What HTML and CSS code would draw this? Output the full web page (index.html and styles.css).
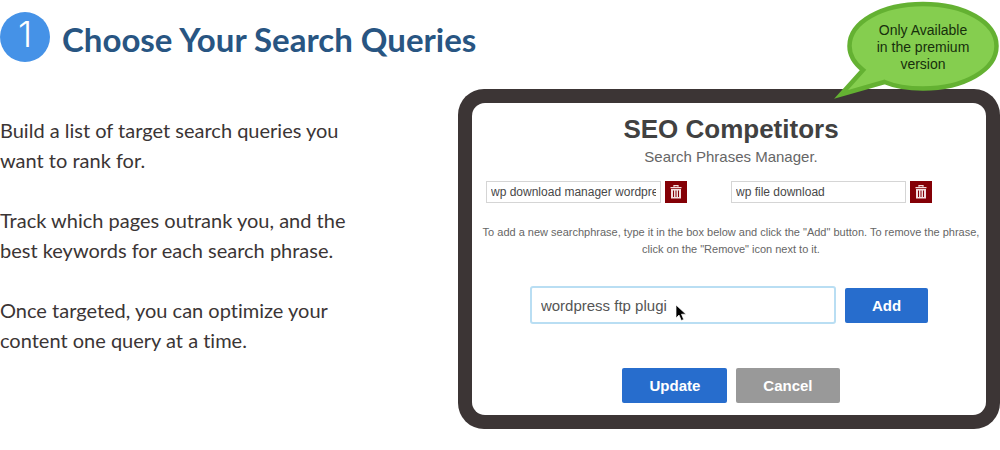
FILE: index.html
```html
<!DOCTYPE html>
<html lang="en">
<head>
<meta charset="utf-8">
<meta name="viewport" content="width=device-width, initial-scale=1">
<title>Choose Your Search Queries</title>
<link rel="stylesheet" href="styles.css">
</head>
<body>
<main class="step">
  <header class="step-header">
    <span class="step-number">1</span>
    <h1 class="step-title">Choose Your Search Queries</h1>
  </header>
  <div class="step-body">
    <div class="copy">
      <p>Build a list of target search queries you want to rank for.</p>
      <p>Track which pages outrank you, and the best keywords for each search phrase.</p>
      <p>Once targeted, you can optimize your content one query at a time.</p>
    </div>
    <div class="device">
      <form class="manager">
        <h2 class="manager-title">SEO Competitors</h2>
        <p class="manager-subtitle">Search Phrases Manager.</p>
        <div class="phrases">
          <div class="phrase">
            <input class="phrase-input" type="text" aria-label="Search phrase 1" value="wp download manager wordpress">
            <button class="remove" type="button" aria-label="Remove phrase 1">
              <svg class="trash" viewBox="0 0 12 14" aria-hidden="true"><path d="M4 1.8V.6h4v1.2M.5 2.7h11" fill="none" stroke="currentColor" stroke-width="1.3"/><path d="M1 4h10v9.5H1z" fill="currentColor"/><path d="M3.5 5.5V12M6 5.5V12M8.500 5.500V12" stroke="#840006" stroke-width="1"/></svg>
            </button>
          </div>
          <div class="phrase">
            <input class="phrase-input" type="text" aria-label="Search phrase 2" value="wp file download">
            <button class="remove" type="button" aria-label="Remove phrase 2">
              <svg class="trash" viewBox="0 0 12 14" aria-hidden="true"><path d="M4 1.8V.6h4v1.2M.5 2.7h11" fill="none" stroke="currentColor" stroke-width="1.3"/><path d="M1 4h10v9.5H1z" fill="currentColor"/><path d="M3.5 5.5V12M6 5.5V12M8.500 5.500V12" stroke="#840006" stroke-width="1"/></svg>
            </button>
          </div>
        </div>
        <p class="hint">To add a new searchphrase, type it in the box below and click the "Add" button. To remove the phrase, click on the "Remove" icon next to it.</p>
        <div class="add-row">
          <div class="add-field">
            <input class="add-input" type="text" aria-label="New search phrase" value="wordpress ftp plugi">
            <svg class="cursor" viewBox="0 0 12 18" aria-hidden="true"><path d="M1 1v13l3-3 2.300 5.500 2.400-1L6.500 10.200H11z" fill="#000" stroke="#fff" stroke-width=".7"/></svg>
          </div>
          <button class="button add-button" type="button">Add</button>
        </div>
        <div class="actions">
          <button class="button update-button" type="button">Update</button>
          <button class="button cancel-button" type="button">Cancel</button>
        </div>
      </form>
      <div class="badge">
        <svg class="badge-shape" viewBox="0 0 168 100" aria-hidden="true"><path d="M31 70C22 63 17.500 54 17.500 46C17.500 22 50 4 91 4S164.500 22 164.500 46S132 88.500 91 88.500C76 88.500 63 86.500 52.500 82L9 94.500Z" fill="#85ce4f" stroke="#64b132" stroke-width="4.500"/></svg>
        <p class="badge-text">Only Available<br>in the premium<br>version</p>
      </div>
    </div>
  </div>
</main>
</body>
</html>
```
FILE: styles.css
```css
* { box-sizing: border-box; }

body {
  margin: 0;
  background: #fff;
  color: #3b3535;
  font-family: Lato, sans-serif;
  font-variant-ligatures: none;
}

h1, h2, p { margin: 0; }

.step-header {
  display: flex;
  align-items: flex-start;
  gap: 12px;
  padding: 12px 0 25px;
}

.step-number {
  width: 50px;
  height: 50px;
  border-radius: 50%;
  background: #4592e7;
  color: #fff;
  font: 300 36px/44px Inter, sans-serif;
  text-align: center;
}

.step-title {
  padding-top: 2px;
  color: #285582;
  font-size: 33px;
  font-weight: 700;
  line-height: 50px;
}

.step-body {
  display: grid;
  grid-template-columns: 458fr 542fr;
  align-items: start;
}

.copy {
  display: grid;
  gap: 30px;
  max-width: 360px;
  padding-top: 26px;
  font-size: 20px;
  line-height: 30px;
}

.device {
  position: relative;
  padding: 14px;
  border-radius: 26px;
  background: #3c3535;
}

.manager {
  padding: 12px 0;
  border-radius: 13px;
  background: #fff;
  color: #484848;
  font-family: "Liberation Sans", Arial, sans-serif;
  text-align: center;
}

.manager-title {
  padding-left: 4px;
  color: #414141;
  font-size: 26px;
  line-height: 28px;
}

.manager-subtitle {
  padding-left: 4px;
  color: #666;
  font-size: 15px;
  line-height: 28px;
}

.phrases {
  display: grid;
  grid-template-columns: 1fr 1fr;
  padding: 10px 10px 0 14px;
}

.phrase {
  display: flex;
  gap: 4px;
  padding-right: 44px;
}

.phrase-input {
  flex: 1;
  min-width: 0;
  height: 22px;
  padding: 0 4px;
  border: 1px solid #d5d5d5;
  color: #484848;
  font: 12px "Liberation Sans", Arial, sans-serif;
}

.remove {
  display: grid;
  place-items: center;
  width: 22px;
  height: 22px;
  padding: 0;
  border: 0;
  background: #840006;
  color: #f3dede;
}

.trash {
  width: 12px;
  height: 14px;
}

.hint {
  padding: 21px 4px 0 8px;
  color: #666;
  font-size: 11px;
  line-height: 17px;
}

.add-row {
  display: flex;
  justify-content: center;
  align-items: center;
  gap: 9px;
  padding-top: 28px;
}

.add-field {
  position: relative;
  flex: 0 1 306px;
}

.add-input {
  display: block;
  width: 100%;
  height: 38px;
  padding: 0 9px;
  border: 2px solid #b9def3;
  border-radius: 3px;
  color: #555;
  font: 15px "Liberation Sans", Arial, sans-serif;
}

.cursor {
  position: absolute;
  top: 18px;
  left: 145px;
  width: 12px;
  height: 18px;
}

.button {
  height: 35px;
  padding: 0 27px;
  border: 0;
  border-radius: 2px;
  background: #276dcd;
  color: #fff;
  font: bold 15px "Liberation Sans", Arial, sans-serif;
}

.actions {
  display: flex;
  justify-content: center;
  gap: 9px;
  padding: 44px 0 0 4px;
}

.cancel-button { background: #999; }

.badge {
  position: absolute;
  top: -89px;
  right: 0;
  width: 168px;
  height: 100px;
}

.badge-shape {
  display: block;
  width: 100%;
  height: 100%;
}

.badge-text {
  position: absolute;
  inset: 22px 0 auto 14px;
  color: #17300c;
  font: 14px/17px "Liberation Sans", Arial, sans-serif;
  text-align: center;
}
```
